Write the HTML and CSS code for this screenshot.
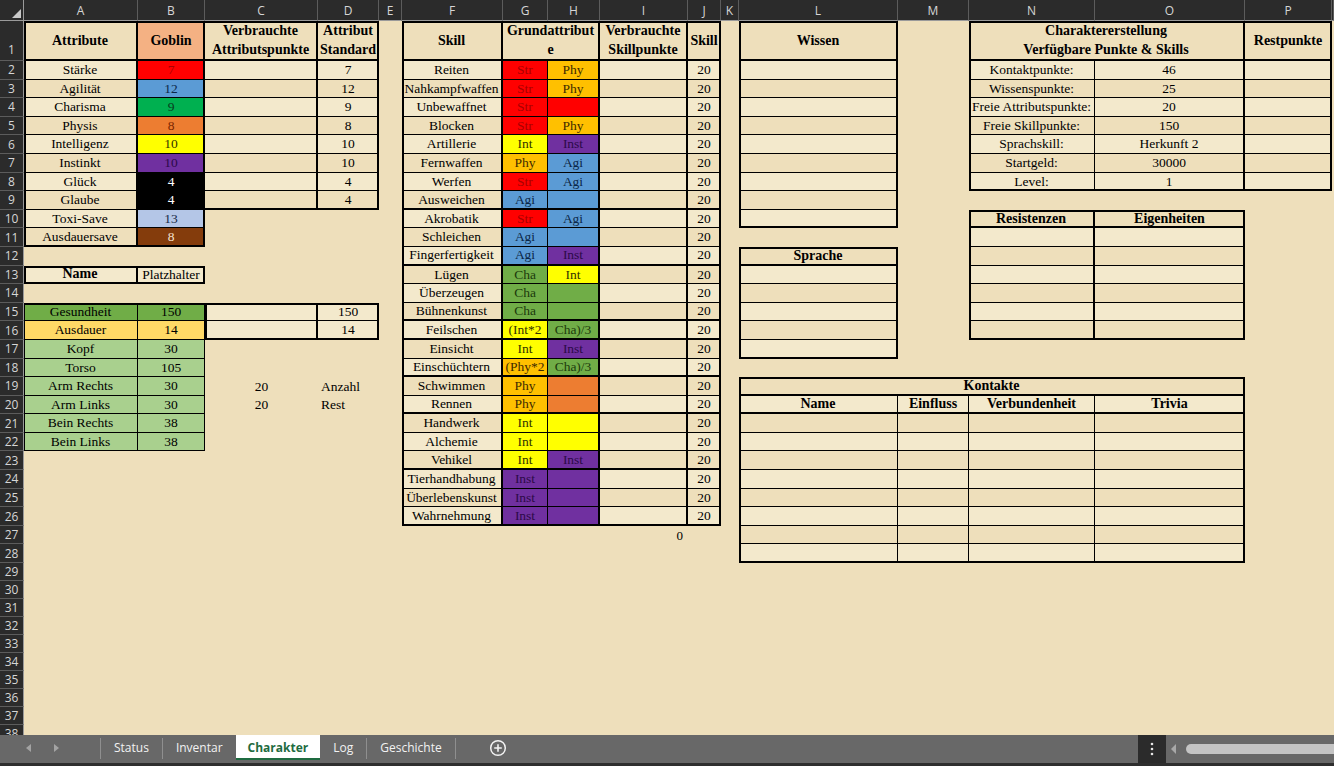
FILE: index.html
```html
<!DOCTYPE html>
<html lang="de">
<head>
<meta charset="utf-8">
<title>Charakter</title>
<link rel="stylesheet" href="styles.css">
</head>
<body>
<div class="app">
<div class="sheet">
<div class="ch corner"><svg width="9" height="9" viewBox="0 0 9 9"><polygon points="9,0 9,9 0,9" fill="#c9c9c9"/></svg></div>
<div class="ch">A</div><div class="ch">B</div><div class="ch">C</div><div class="ch">D</div><div class="ch">E</div><div class="ch">F</div><div class="ch">G</div><div class="ch">H</div><div class="ch">I</div><div class="ch">J</div><div class="ch">K</div><div class="ch">L</div><div class="ch">M</div><div class="ch">N</div><div class="ch">O</div><div class="ch">P</div><div class="ch"></div>
<div class="rh tall">1</div><div class="rh">2</div><div class="rh">3</div><div class="rh">4</div><div class="rh">5</div><div class="rh">6</div><div class="rh">7</div><div class="rh">8</div><div class="rh">9</div><div class="rh">10</div>
<div class="rh">11</div><div class="rh">12</div><div class="rh">13</div><div class="rh">14</div><div class="rh">15</div><div class="rh">16</div><div class="rh">17</div><div class="rh">18</div><div class="rh">19</div><div class="rh">20</div>
<div class="rh">21</div><div class="rh">22</div><div class="rh">23</div><div class="rh">24</div><div class="rh">25</div><div class="rh">26</div><div class="rh">27</div><div class="rh">28</div><div class="rh">29</div><div class="rh">30</div>
<div class="rh">31</div><div class="rh">32</div><div class="rh">33</div><div class="rh">34</div><div class="rh">35</div><div class="rh">36</div><div class="rh">37</div><div class="rh">38</div>

<!-- Attribute A-B -->
<div class="blk b-attrAB g-ab hasHead">
  <div class="c hd tr">Attribute</div><div class="c hd goblin">Goblin</div>
  <div class="r lt"><div class="c tr">Stärke</div><div class="c red">7</div></div>
  <div class="r dk"><div class="c tr">Agilität</div><div class="c blue">12</div></div>
  <div class="r lt"><div class="c tr">Charisma</div><div class="c green">9</div></div>
  <div class="r dk"><div class="c tr">Physis</div><div class="c orange">8</div></div>
  <div class="r lt"><div class="c tr">Intelligenz</div><div class="c yellow">10</div></div>
  <div class="r dk"><div class="c tr">Instinkt</div><div class="c purple">10</div></div>
  <div class="r lt"><div class="c tr">Glück</div><div class="c black">4</div></div>
  <div class="r dk"><div class="c tr">Glaube</div><div class="c black">4</div></div>
  <div class="r lt"><div class="c tr">Toxi-Save</div><div class="c lblue">13</div></div>
  <div class="r dk"><div class="c tr">Ausdauersave</div><div class="c brown">8</div></div>
</div>

<!-- Attribute C-D -->
<div class="blk b-attrCD g-cd hasHead">
  <div class="c hd tr">Verbrauchte<br>Attributspunkte</div><div class="c hd">Attribut<br>Standard</div>
  <div class="r lt"><div class="c tr"></div><div class="c">7</div></div>
  <div class="r dk"><div class="c tr"></div><div class="c">12</div></div>
  <div class="r lt"><div class="c tr"></div><div class="c">9</div></div>
  <div class="r dk"><div class="c tr"></div><div class="c">8</div></div>
  <div class="r lt"><div class="c tr"></div><div class="c">10</div></div>
  <div class="r dk"><div class="c tr"></div><div class="c">10</div></div>
  <div class="r lt"><div class="c tr"></div><div class="c">4</div></div>
  <div class="r dk"><div class="c tr"></div><div class="c">4</div></div>
</div>

<!-- Name -->
<div class="blk b-name g-ab">
  <div class="r lt"><div class="c b tr">Name</div><div class="c">Platzhalter</div></div>
</div>

<!-- Vital A-B -->
<div class="blk b-vitalAB g-ab">
  <div class="r"><div class="c gsd">Gesundheit</div><div class="c gsd">150</div></div>
  <div class="r"><div class="c aus">Ausdauer</div><div class="c aus">14</div></div>
  <div class="r"><div class="c lgr">Kopf</div><div class="c lgr">30</div></div>
  <div class="r"><div class="c lgr">Torso</div><div class="c lgr">105</div></div>
  <div class="r"><div class="c lgr">Arm Rechts</div><div class="c lgr">30</div></div>
  <div class="r"><div class="c lgr">Arm Links</div><div class="c lgr">30</div></div>
  <div class="r"><div class="c lgr">Bein Rechts</div><div class="c lgr">38</div></div>
  <div class="r"><div class="c lgr">Bein Links</div><div class="c lgr">38</div></div>
</div>

<!-- Vital C-D -->
<div class="blk b-vitalCD g-cd">
  <div class="r lt"><div class="c tr"></div><div class="c">150</div></div>
  <div class="r lt"><div class="c tr"></div><div class="c">14</div></div>
</div>

<!-- Notes -->
<div class="b-notes">
  <div class="p ctr">20</div><div class="p lft">Anzahl</div>
  <div class="p ctr">20</div><div class="p lft">Rest</div>
</div>

<!-- Skills -->
<div class="blk b-skill g-skill hasHead">
  <div class="c hd tr">Skill</div>
  <div class="c hd span2 tr">Grundattribut<br>e</div>
  <div class="c hd tr">Verbrauchte<br>Skillpunkte</div>
  <div class="c hd">Skill</div>
  <div class="r lt"><div class="c tr">Reiten</div><div class="c str">Str</div><div class="c tr phy">Phy</div><div class="c tr"></div><div class="c">20</div></div>
  <div class="r dk"><div class="c tr">Nahkampfwaffen</div><div class="c str">Str</div><div class="c tr phy">Phy</div><div class="c tr"></div><div class="c">20</div></div>
  <div class="r lt"><div class="c tr">Unbewaffnet</div><div class="c str">Str</div><div class="c tr str"></div><div class="c tr"></div><div class="c">20</div></div>
  <div class="r dk"><div class="c tr">Blocken</div><div class="c str">Str</div><div class="c tr phy">Phy</div><div class="c tr"></div><div class="c">20</div></div>
  <div class="r lt"><div class="c tr">Artillerie</div><div class="c int">Int</div><div class="c tr inst">Inst</div><div class="c tr"></div><div class="c">20</div></div>
  <div class="r dk"><div class="c tr">Fernwaffen</div><div class="c phy">Phy</div><div class="c tr agi">Agi</div><div class="c tr"></div><div class="c">20</div></div>
  <div class="r lt"><div class="c tr">Werfen</div><div class="c str">Str</div><div class="c tr agi">Agi</div><div class="c tr"></div><div class="c">20</div></div>
  <div class="r dk tb"><div class="c tr">Ausweichen</div><div class="c agi">Agi</div><div class="c tr agi"></div><div class="c tr"></div><div class="c">20</div></div>
  <div class="r lt"><div class="c tr">Akrobatik</div><div class="c str">Str</div><div class="c tr agi">Agi</div><div class="c tr"></div><div class="c">20</div></div>
  <div class="r dk"><div class="c tr">Schleichen</div><div class="c agi">Agi</div><div class="c tr agi"></div><div class="c tr"></div><div class="c">20</div></div>
  <div class="r lt tb"><div class="c tr">Fingerfertigkeit</div><div class="c agi">Agi</div><div class="c tr inst">Inst</div><div class="c tr"></div><div class="c">20</div></div>
  <div class="r dk"><div class="c tr">Lügen</div><div class="c cha">Cha</div><div class="c tr int">Int</div><div class="c tr"></div><div class="c">20</div></div>
  <div class="r lt"><div class="c tr">Überzeugen</div><div class="c cha">Cha</div><div class="c tr cha"></div><div class="c tr"></div><div class="c">20</div></div>
  <div class="r dk tb"><div class="c tr">Bühnenkunst</div><div class="c cha">Cha</div><div class="c tr cha"></div><div class="c tr"></div><div class="c">20</div></div>
  <div class="r lt tb"><div class="c tr">Feilschen</div><div class="c int">(Int*2</div><div class="c tr cha">Cha)/3</div><div class="c tr"></div><div class="c">20</div></div>
  <div class="r dk"><div class="c tr">Einsicht</div><div class="c int">Int</div><div class="c tr inst">Inst</div><div class="c tr"></div><div class="c">20</div></div>
  <div class="r lt tb"><div class="c tr">Einschüchtern</div><div class="c phy">(Phy*2</div><div class="c tr cha">Cha)/3</div><div class="c tr"></div><div class="c">20</div></div>
  <div class="r dk"><div class="c tr">Schwimmen</div><div class="c phy">Phy</div><div class="c tr orange"></div><div class="c tr"></div><div class="c">20</div></div>
  <div class="r lt tb"><div class="c tr">Rennen</div><div class="c phy">Phy</div><div class="c tr orange"></div><div class="c tr"></div><div class="c">20</div></div>
  <div class="r dk"><div class="c tr">Handwerk</div><div class="c int">Int</div><div class="c tr int"></div><div class="c tr"></div><div class="c">20</div></div>
  <div class="r lt"><div class="c tr">Alchemie</div><div class="c int">Int</div><div class="c tr int"></div><div class="c tr"></div><div class="c">20</div></div>
  <div class="r dk tb"><div class="c tr">Vehikel</div><div class="c int">Int</div><div class="c tr inst">Inst</div><div class="c tr"></div><div class="c">20</div></div>
  <div class="r lt"><div class="c tr">Tierhandhabung</div><div class="c inst">Inst</div><div class="c tr inst"></div><div class="c tr"></div><div class="c">20</div></div>
  <div class="r dk"><div class="c tr">Überlebenskunst</div><div class="c inst">Inst</div><div class="c tr inst"></div><div class="c tr"></div><div class="c">20</div></div>
  <div class="r lt"><div class="c tr">Wahrnehmung</div><div class="c inst">Inst</div><div class="c tr inst"></div><div class="c tr"></div><div class="c">20</div></div>
</div>

<div class="b-zero">0</div>

<!-- Wissen -->
<div class="blk b-wissen g-l hasHead">
  <div class="c hd">Wissen</div>
  <div class="r lt"><div class="c"></div></div>
  <div class="r dk"><div class="c"></div></div>
  <div class="r lt"><div class="c"></div></div>
  <div class="r dk"><div class="c"></div></div>
  <div class="r lt"><div class="c"></div></div>
  <div class="r dk"><div class="c"></div></div>
  <div class="r lt"><div class="c"></div></div>
  <div class="r dk"><div class="c"></div></div>
  <div class="r lt"><div class="c"></div></div>
</div>

<!-- Sprache -->
<div class="blk b-sprache g-l">
  <div class="c hd">Sprache</div>
  <div class="r lt"><div class="c"></div></div>
  <div class="r dk"><div class="c"></div></div>
  <div class="r lt"><div class="c"></div></div>
  <div class="r dk"><div class="c"></div></div>
  <div class="r lt"><div class="c"></div></div>
</div>

<!-- Charaktererstellung -->
<div class="blk b-chargen g-nop hasHead">
  <div class="c hd span2 tr">Charaktererstellung<br>Verfügbare Punkte &amp; Skills</div>
  <div class="c hd">Restpunkte</div>
  <div class="r lt"><div class="c">Kontaktpunkte:</div><div class="c tr">46</div><div class="c"></div></div>
  <div class="r dk"><div class="c">Wissenspunkte:</div><div class="c tr">25</div><div class="c"></div></div>
  <div class="r lt"><div class="c">Freie Attributspunkte:</div><div class="c tr">20</div><div class="c"></div></div>
  <div class="r dk"><div class="c">Freie Skillpunkte:</div><div class="c tr">150</div><div class="c"></div></div>
  <div class="r lt"><div class="c">Sprachskill:</div><div class="c tr">Herkunft 2</div><div class="c"></div></div>
  <div class="r dk"><div class="c">Startgeld:</div><div class="c tr">30000</div><div class="c"></div></div>
  <div class="r lt"><div class="c">Level:</div><div class="c tr">1</div><div class="c"></div></div>
</div>

<!-- Resistenzen -->
<div class="blk b-resist g-no">
  <div class="c hd tr">Resistenzen</div><div class="c hd">Eigenheiten</div>
  <div class="r lt"><div class="c tr"></div><div class="c"></div></div>
  <div class="r dk"><div class="c tr"></div><div class="c"></div></div>
  <div class="r lt"><div class="c tr"></div><div class="c"></div></div>
  <div class="r dk"><div class="c tr"></div><div class="c"></div></div>
  <div class="r lt"><div class="c tr"></div><div class="c"></div></div>
  <div class="r dk"><div class="c tr"></div><div class="c"></div></div>
</div>

<!-- Kontakte -->
<div class="blk b-kontakte g-lo">
  <div class="c hd span4">Kontakte</div>
  <div class="r lt tb"><div class="c b">Name</div><div class="c b">Einfluss</div><div class="c b">Verbundenheit</div><div class="c b">Trivia</div></div>
  <div class="r dk"><div class="c"></div><div class="c"></div><div class="c"></div><div class="c"></div></div>
  <div class="r lt"><div class="c"></div><div class="c"></div><div class="c"></div><div class="c"></div></div>
  <div class="r dk"><div class="c"></div><div class="c"></div><div class="c"></div><div class="c"></div></div>
  <div class="r lt"><div class="c"></div><div class="c"></div><div class="c"></div><div class="c"></div></div>
  <div class="r dk"><div class="c"></div><div class="c"></div><div class="c"></div><div class="c"></div></div>
  <div class="r lt"><div class="c"></div><div class="c"></div><div class="c"></div><div class="c"></div></div>
  <div class="r dk"><div class="c"></div><div class="c"></div><div class="c"></div><div class="c"></div></div>
  <div class="r lt"><div class="c"></div><div class="c"></div><div class="c"></div><div class="c"></div></div>
</div>
</div>

<div class="tabbar">
  <div class="tabnav"><span class="tri tri-l"></span><span class="tri tri-r"></span></div>
  <span class="vsep"></span>
  <div class="tab">Status</div>
  <span class="vsep"></span>
  <div class="tab">Inventar</div>
  <div class="tab active">Charakter</div>
  <div class="tab">Log</div>
  <span class="vsep"></span>
  <div class="tab">Geschichte</div>
  <span class="vsep"></span>
  <div class="add"><svg width="18" height="18" viewBox="0 0 18 18"><circle cx="9" cy="9" r="7.3" fill="none" stroke="#f2f2f2" stroke-width="1.5"/><path d="M9 5.2v7.6M5.2 9h7.6" stroke="#f2f2f2" stroke-width="1.6"/></svg></div>
  <div class="barright">
    <div class="more"><svg width="4" height="14" viewBox="0 0 4 14"><circle cx="2" cy="2" r="1.3" fill="#e6e6e6"/><circle cx="2" cy="7" r="1.3" fill="#e6e6e6"/><circle cx="2" cy="12" r="1.3" fill="#e6e6e6"/></svg></div>
    <div class="hscroll"><span class="tri tri-s"></span><div class="thumb"></div></div>
  </div>
</div>
</div>
</body>
</html>
```

FILE: styles.css
```css
:root {
  --bg: #EEDFBB;
  --lt: #F3E9CC;
}
* { box-sizing: border-box; }
html, body { margin: 0; padding: 0; }
body {
  width: 1334px; height: 766px; overflow: hidden;
  background: var(--bg);
  font-family: "Liberation Serif", "Times New Roman", serif;
  color: #000;
}
.app { width: 1334px; height: 766px; display: flex; flex-direction: column; }

.sheet {
  flex: 0 0 735px; height: 735px; overflow: hidden;
  display: grid;
  grid-template-columns: 24px 114px 67px 113px 61px 23px 101px 45px 52px 88px 33px 18px 159px 71px 126px 150px 87px 2px;
  grid-template-rows: 21px 40px repeat(27, 18.6px) repeat(10, 18px);
  background: var(--bg);
}

/* headers */
.ch {
  background: #2b2b2b; color: #d6d6d6;
  font: 12px "Open Sans", "Noto Sans", sans-serif;
  display: flex; align-items: center; justify-content: center;
  border-right: 1px solid #5c5c5c; border-bottom: 1px solid #9a9a9a;
}
.corner { justify-content: flex-end; align-items: flex-end; padding: 0 2px 2px 0; border-right-color: #9a9a9a; }
.rh {
  grid-column: 1;
  background: #2b2b2b; color: #d6d6d6;
  font: 12px "Open Sans", "Noto Sans", sans-serif;
  display: flex; align-items: center; justify-content: center;
  border-right: 1px solid #9a9a9a; border-bottom: 1px solid #5c5c5c;
}
.rh.tall { align-items: flex-end; padding-bottom: 2px; }

/* block placement */
.b-attrAB { grid-column: 2 / 4; grid-row: 2 / 13; }
.b-attrCD { grid-column: 4 / 6; grid-row: 2 / 11; }
.b-name { grid-column: 2 / 4; grid-row: 14 / 15; }
.b-vitalAB { grid-column: 2 / 4; grid-row: 16 / 24; }
.b-vitalCD { grid-column: 4 / 6; grid-row: 16 / 18; }
.b-notes { grid-column: 4 / 6; grid-row: 20 / 22; }
.b-skill { grid-column: 7 / 12; grid-row: 2 / 28; }
.b-zero { grid-column: 10 / 11; grid-row: 28 / 29; }
.b-wissen { grid-column: 13 / 14; grid-row: 2 / 12; }
.b-sprache { grid-column: 13 / 14; grid-row: 13 / 19; }
.b-kontakte { grid-column: 13 / 17; grid-row: 20 / 30; }
.b-chargen { grid-column: 15 / 18; grid-row: 2 / 10; }
.b-resist { grid-column: 15 / 17; grid-row: 11 / 18; }

/* blocks */
.blk { position: relative; display: grid; grid-auto-rows: minmax(0, 1fr); }
.blk::after {
  content: ""; position: absolute; inset: 0;
  border: 2px solid #000; pointer-events: none;
}
.b-attrCD::after { border-left-width: 0; }
.b-vitalAB::after { border-width: 2px 1px 1px 1px; }
.hasHead { grid-template-rows: 40px; }
.g-ab { grid-template-columns: 114px 67px; }
.g-cd { grid-template-columns: 113px 61px; }
.g-skill { grid-template-columns: 101px 45px 52px 88px 33px; }
.g-l { grid-template-columns: 159px; }
.g-no { grid-template-columns: 126px 150px; }
.g-nop { grid-template-columns: 126px 150px 87px; }
.g-lo { grid-template-columns: 159px 71px 126px 150px; }

.r { display: contents; }

.c {
  display: flex; align-items: center; justify-content: center;
  min-width: 0; overflow: hidden; white-space: nowrap;
  border-right: 1px solid #000; border-bottom: 1px solid #000;
  font-size: 13.5px; line-height: 1; padding: 0 1px;
}
.hd {
  font-weight: bold; font-size: 14px; line-height: 19px;
  text-align: center; white-space: normal;
  background: var(--bg);
  border-bottom-width: 2px;
}
.b { font-weight: bold; font-size: 14px; }
.tr { border-right-width: 2px; }
.span2 { grid-column: span 2; }
.span4 { grid-column: span 4; }

.lt > .c { background: var(--lt); }
.dk > .c { background: var(--bg); }
.tb > .c { border-bottom-width: 2px; }

/* fills */
.c.goblin { background: #F4B183; }
.c.red { background: #FF0000; color: #A80000; }
.c.blue { background: #5B9BD5; color: #0B2747; }
.c.green { background: #00B050; color: #0A3A1C; }
.c.orange { background: #ED7D31; color: #7A2500; }
.c.yellow { background: #FFFF00; color: #333300; }
.c.purple { background: #7030A0; color: #2C0A48; }
.c.black { background: #000000; color: #FFFFFF; }
.c.lblue { background: #B4C6E7; color: #172845; }
.c.brown { background: #843C0C; color: #F6E2CF; }
.c.str { background: #FF0000; color: #A80000; }
.c.phy { background: #FFC000; color: #3E2B00; }
.c.int { background: #FFFF00; color: #333300; }
.c.inst { background: #7030A0; color: #2C0A48; }
.c.agi { background: #5B9BD5; color: #0B2747; }
.c.cha { background: #70AD47; color: #1C3A0C; }
.c.gsd { background: #70AD47; }
.c.aus { background: #FFD966; }
.c.lgr { background: #A9D08E; }

/* plain text cells */
.b-notes { display: grid; grid-template-columns: 113px 61px; grid-auto-rows: minmax(0, 1fr); }
.p { display: flex; align-items: center; font-size: 13.5px; line-height: 1; white-space: nowrap; }
.p.ctr { justify-content: center; }
.p.lft { padding-left: 3px; }
.b-zero {
  display: flex; align-items: center; justify-content: flex-end;
  padding-right: 5px; font-size: 13px; line-height: 1;
}

/* tab bar */
.tabbar {
  flex: 0 0 31px; height: 31px;
  background: #686868; border-bottom: 3px solid #2e2e2e;
  display: flex; align-items: flex-start;
  font-family: "Open Sans", "Noto Sans", sans-serif; font-size: 12px; color: #f2f2f2;
}
.tabnav { width: 100px; height: 25px; display: flex; align-items: center; }
.tri { display: block; width: 0; height: 0; border-top: 4px solid transparent; border-bottom: 4px solid transparent; }
.tri-l { border-right: 5px solid #a3a3a3; margin-left: 26px; }
.tri-r { border-left: 5px solid #a3a3a3; margin-left: 23px; }
.vsep { flex: 0 0 1px; height: 21px; margin-top: 3px; background: #8f8f8f; }
.tab { height: 25px; padding: 0 13px; display: flex; align-items: center; white-space: nowrap; }
.tab.active {
  background: #ffffff; color: #1E6B40; font-weight: bold;
  border-bottom: 2px solid #1E6B40; padding: 2px 12px 0;
}
.add { margin-left: 33px; height: 25px; display: flex; align-items: center; }
.barright { margin-left: auto; display: flex; height: 28px; }
.more { width: 28px; height: 28px; background: #2b2b2b; display: flex; align-items: center; justify-content: center; }
.hscroll { width: 168px; height: 28px; background: #686868; display: flex; align-items: center; padding-top: 0; }
.tri-s { border-right: 5px solid #a8a8a8; border-top-width: 5px; border-bottom-width: 5px; margin-left: 5px; }
.thumb { flex: 1; height: 10px; margin-left: 10px; background: #c4c4c4; border-radius: 5px 0 0 5px; }
```
